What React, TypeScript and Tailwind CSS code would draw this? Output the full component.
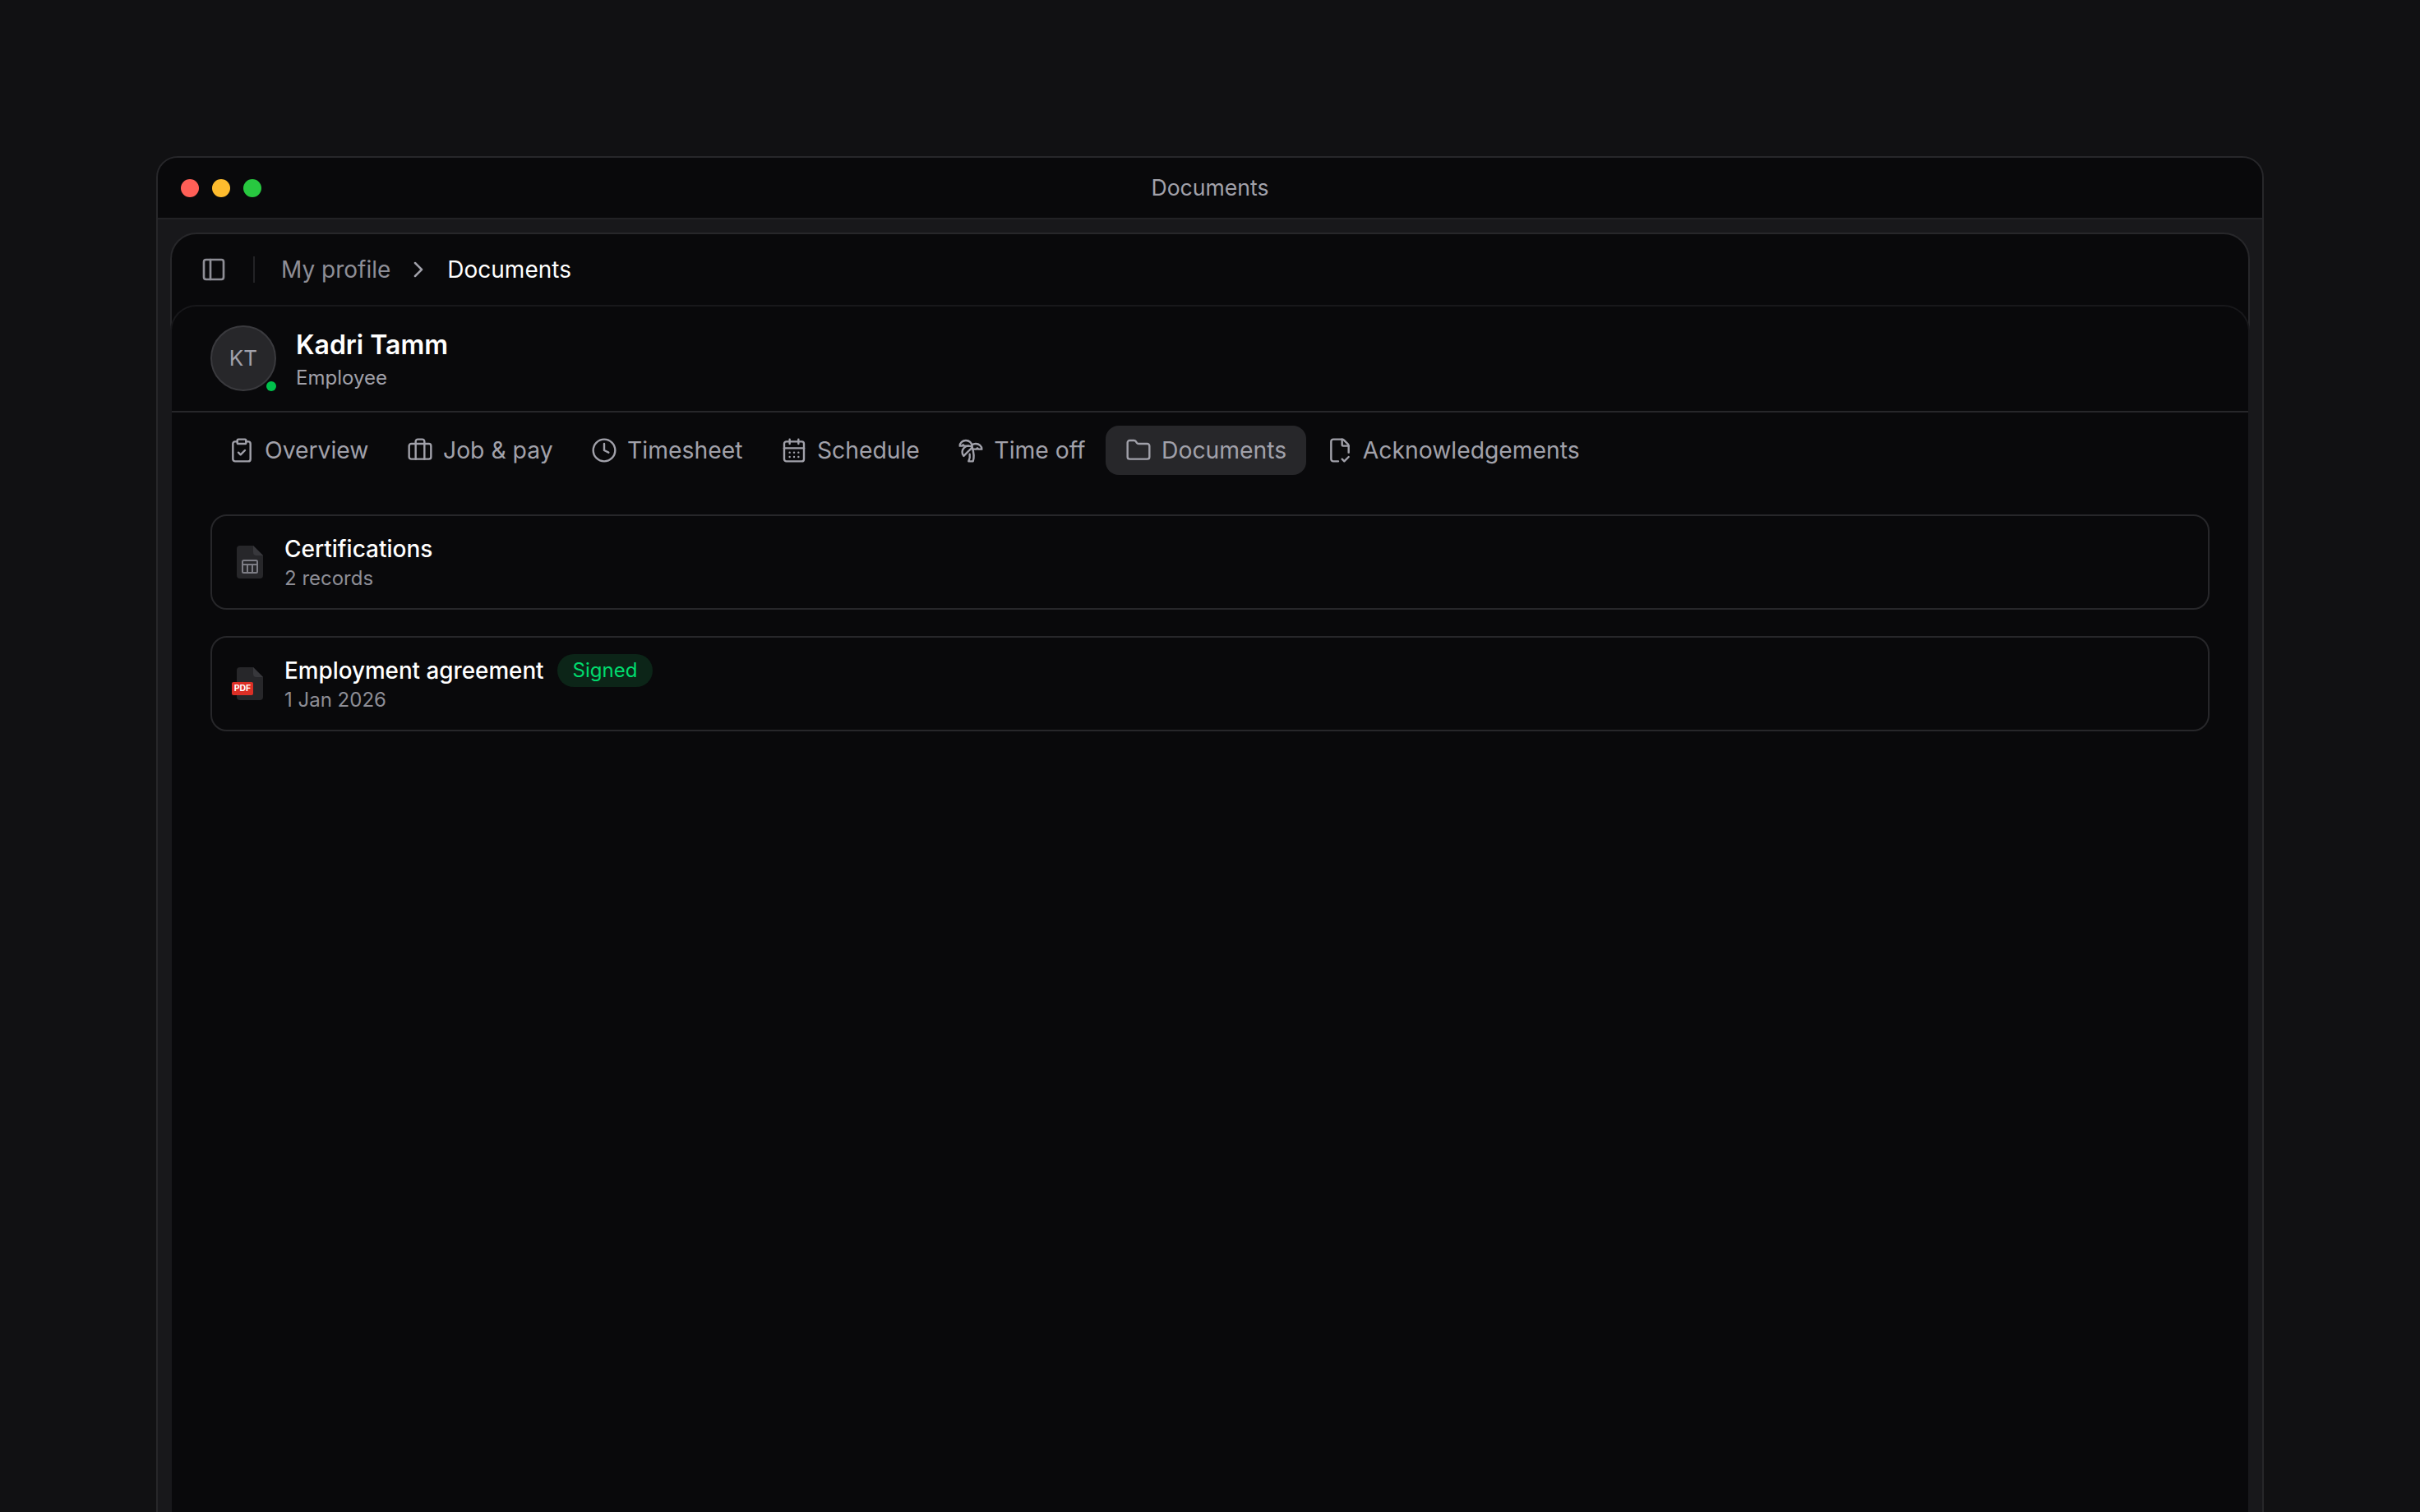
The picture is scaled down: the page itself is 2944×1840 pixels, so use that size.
import { Briefcase, CalendarDays, ChevronRight, ClipboardCheck, Clock, FileCheckCorner, Folder, PanelLeft, TreePalm } from "lucide-react";
import type { ComponentType } from "react";

type Tab = { label: string; Icon: ComponentType<{ size?: number; strokeWidth?: number }>; active?: boolean };

const tabs: Tab[] = [
  { label: "Overview", Icon: ClipboardCheck },
  { label: "Job & pay", Icon: Briefcase },
  { label: "Timesheet", Icon: Clock },
  { label: "Schedule", Icon: CalendarDays },
  { label: "Time off", Icon: TreePalm },
  { label: "Documents", Icon: Folder, active: true },
  { label: "Acknowledgements", Icon: FileCheckCorner },
];

function DocShape({ table }: { table?: boolean }) {
  return (
    <svg width="32" height="40" viewBox="0 0 32 40" fill="none">
      <path d="M4 0h16l12 12v24a4 4 0 0 1-4 4H4a4 4 0 0 1-4-4V4a4 4 0 0 1 4-4Z" fill="#27272a" />
      <path d="M20 0l12 12h-8a4 4 0 0 1-4-4V0Z" fill="#38383c" />
      {table && (
        <g stroke="#7c7c84" strokeWidth="2" fill="none">
          <rect x="7" y="18" width="18" height="15" rx="1.5" />
          <path d="M7 23h18M13 23v10M19 23v10" />
        </g>
      )}
    </svg>
  );
}

export default function App() {
  return (
    <div className="h-[1840px] w-[2944px] overflow-hidden bg-[#111113] px-[190px] pt-[190px] font-['Inter',sans-serif]">
      <div className="flex h-[1700px] flex-col rounded-t-[26px] border-2 border-[#27272a] bg-[#18181b]">
        <div className="grid h-[75px] shrink-0 grid-cols-3 items-center rounded-t-[24px] border-b-2 border-[#222225] bg-[#09090b] px-[28px]">
          <div className="flex gap-[16px]">
            <span className="h-[22px] w-[22px] rounded-full bg-[#ff5f57]" />
            <span className="h-[22px] w-[22px] rounded-full bg-[#febc2e]" />
            <span className="h-[22px] w-[22px] rounded-full bg-[#28c840]" />
          </div>
          <div className="text-center text-[26.6px] text-[#a1a1aa]">Documents</div>
        </div>
        <div className="flex flex-1 flex-col px-[15px] pt-[16px]">
          <div className="flex flex-1 flex-col rounded-t-[32px] border-2 border-[#27272a] bg-[#09090b]">
            <div className="flex h-[86px] shrink-0 items-center pl-[35px]">
              <span className="flex text-[#8e8e96]">
                <PanelLeft size={32} strokeWidth={2} />
              </span>
              <div className="ml-[32px] h-[32px] w-[2px] bg-[#232326]" />
              <span className="ml-[32px] text-[28px] text-[#8e8e96]">My profile</span>
              <span className="ml-[18px] flex text-[#a1a1aa]">
                <ChevronRight size={32} strokeWidth={1.9} />
              </span>
              <span className="ml-[19px] text-[28px] text-white">Documents</span>
            </div>
            <div className="-mx-[2px] flex flex-1 flex-col rounded-t-[32px] border-x-2 border-t-2 border-[#18181b]">
              <div className="flex h-[129px] shrink-0 items-center border-b-2 border-[#27272a] pl-[47px]">
                <div className="relative -mt-[2px] flex h-[80px] w-[80px] items-center justify-center rounded-full border-2 border-[#3a3a3e] bg-[#27272a] text-[26px] text-[#a1a1aa]">
                  KT
                  <span className="absolute bottom-[-2px] right-[-2px] h-[12px] w-[12px] rounded-full bg-[#00c04b]" />
                </div>
                <div className="ml-[24px] flex flex-col">
                  <span className="text-[32px] font-semibold leading-[45px] text-white">Kadri Tamm</span>
                  <span className="text-[24px] leading-[35px] text-[#a1a1aa]">Employee</span>
                </div>
              </div>
              <div className="mt-[16px] flex h-[60px] shrink-0 gap-[2.5px] pl-[47px]">
                {tabs.map(({ label, Icon, active }) => (
                  <div
                    key={label}
                    className={
                      active
                        ? "flex items-center gap-[12px] rounded-[16px] bg-[#27272a] px-[24px] text-[28.3px] text-[#a1a1aa]"
                        : "flex items-center gap-[12px] rounded-[16px] px-[22px] text-[28.3px] text-[#a1a1aa]"
                    }
                  >
                    <Icon size={32} strokeWidth={1.8} />
                    <span>{label}</span>
                  </div>
                ))}
              </div>
              <div className="mt-[48px] flex flex-col gap-[32px] px-[47px]">
                <div className="flex h-[116px] items-center rounded-[20px] border-2 border-[#27272a] pl-[30px]">
                  <DocShape table />
                  <div className="ml-[26px] flex flex-col">
                    <span className="text-[28px] font-medium leading-[40px] text-white">Certifications</span>
                    <span className="text-[24px] leading-[32px] text-[#8e8e96]">2 records</span>
                  </div>
                </div>
                <div className="flex h-[116px] items-center rounded-[20px] border-2 border-[#27272a] pl-[30px]">
                  <div className="relative flex">
                    <DocShape />
                    <span className="absolute left-[-6px] top-[18px] flex h-[16px] w-[26px] items-center justify-center rounded-[2px] bg-[#dc2f26] text-[10.5px] font-bold leading-none text-white">
                      PDF
                    </span>
                  </div>
                  <div className="ml-[26px] flex flex-col">
                    <div className="flex items-center">
                      <span className="text-[27.8px] font-medium leading-[40px] text-white">Employment agreement</span>
                      <span className="ml-[16px] flex h-[40px] items-center rounded-full bg-[#0c2518] px-[19px] text-[24px] text-[#00dc6e]">
                        Signed
                      </span>
                    </div>
                    <span className="text-[24px] leading-[32px] text-[#8e8e96]">1 Jan 2026</span>
                  </div>
                </div>
              </div>
            </div>
          </div>
        </div>
      </div>
    </div>
  );
}
